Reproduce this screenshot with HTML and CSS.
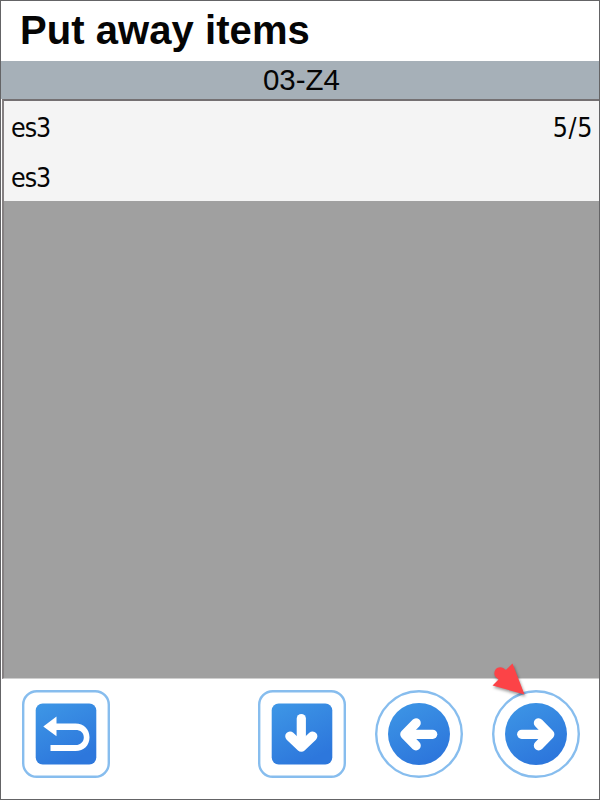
FILE: index.html
```html
<!DOCTYPE html>
<html lang="en">
<head>
<meta charset="utf-8">
<title>Put away items</title>
<link rel="stylesheet" href="styles.css">
</head>
<body>
<main class="screen">
  <h1 class="title">Put away items</h1>
  <div class="location">03-Z4</div>
  <section class="list">
    <div class="item">
      <div class="row"><span>es3</span><span class="qty">5/5</span></div>
      <div class="row"><span>es3</span></div>
    </div>
  </section>
  <footer class="toolbar">
    <button class="btn back" aria-label="Back">
      <svg viewBox="0 0 88 88">
        <defs><linearGradient id="blue" x1="0" y1="0" x2="0.5" y2="1"><stop offset="0" stop-color="#3e97e6"/><stop offset="1" stop-color="#2d77dc"/></linearGradient></defs>
        <rect class="ring" x="1.2" y="1.2" width="85.6" height="85.6" rx="13.5"/>
        <rect x="13.7" y="13.5" width="60.6" height="61" rx="7" fill="url(#blue)"/>
        <path d="M21.3 36.6 34.5 26.5V33.4H53.5C62 33.4 67.5 39.2 67.5 47.2S62 61 53.5 61H28.5V55H53.5C58.5 55 61.8 51.8 61.8 47.2S58.5 39.9 53.5 39.9H34.5V46.3Z" fill="#fff"/>
      </svg>
    </button>
    <button class="btn down" aria-label="Down">
      <svg viewBox="0 0 88 88">
        <rect class="ring" x="1.2" y="1.2" width="85.6" height="85.6" rx="13.5"/>
        <rect x="13.7" y="13.5" width="60.6" height="61" rx="7" fill="url(#blue)"/>
        <path class="shaft" d="M43.3 28.5V52"/>
        <path class="head" d="M32 46.2 43.3 57 54.6 46.2"/>
      </svg>
    </button>
    <button class="btn" aria-label="Previous">
      <svg viewBox="0 0 88 88">
        <circle class="ring" cx="44" cy="44" r="42.8"/>
        <circle cx="44" cy="44" r="31" fill="url(#blue)"/>
        <path class="shaft" d="M57.7 44.3H33"/>
        <path class="head" d="M41 33 30 44.3 41 55.6"/>
      </svg>
    </button>
    <button class="btn" aria-label="Next">
      <svg viewBox="0 0 88 88">
        <circle class="ring" cx="44" cy="44" r="42.8"/>
        <circle cx="44" cy="44" r="31" fill="url(#blue)"/>
        <path class="shaft" d="M29.7 44.3H55"/>
        <path class="head" d="M46.6 33 57.6 44.3 46.6 55.6"/>
      </svg>
      <svg class="pointer" viewBox="0 0 36 36">
        <path d="M32.5 31.5 20.5 .5 13.8 7.1C11 3.5 6 3.2 3.5 6.6 1.8 9 2 12 3.8 14L6.5 16.5.5 22.5Z" fill="#fc4347"/>
      </svg>
    </button>
  </footer>
</main>
</body>
</html>
```
FILE: styles.css
```css
* {
  box-sizing: border-box;
}

body {
  margin: 0;
}

.screen {
  width: 600px;
  height: 800px;
  display: flex;
  flex-direction: column;
  overflow: hidden;
  border: 1px solid #646466;
  background: #fff;
  color: #050505;
  font-family: "Liberation Sans", Arial, sans-serif;
}

.title {
  height: 60px;
  margin: 0;
  padding-left: 19px;
  font-size: 40px;
  line-height: 58px;
  font-weight: bold;
  letter-spacing: 0.06px;
}

.location {
  height: 38px;
  padding-left: 3px;
  background: #a6b0b8;
  font-size: 29.5px;
  line-height: 38px;
  text-align: center;
}

.list {
  height: 580px;
  margin-left: 1px;
  border-top: 2px solid #747072;
  border-left: 2px solid #858182;
  border-bottom: 1px solid #cfcfcf;
  background: #a0a0a0;
}

.item {
  height: 100px;
  background: #f4f4f4;
}

.row {
  display: flex;
  justify-content: space-between;
  height: 50px;
  padding: 0 6px 0 7px;
  font-family: "DejaVu Sans Condensed", "DejaVu Sans", sans-serif;
  font-stretch: condensed;
  font-size: 26.5px;
  line-height: 53px;
  letter-spacing: -1px;
}

.qty {
  letter-spacing: 0.6px;
}

.toolbar {
  display: grid;
  grid-template-columns: repeat(5, 88px);
  column-gap: 29.4px;
  padding: 11px 0 0 21.5px;
}

.btn {
  position: relative;
  width: 88px;
  height: 88px;
  padding: 0;
  border: 0;
  background: none;
}

.btn svg {
  display: block;
  width: 88px;
  height: 88px;
}

.back {
  margin-left: -1px;
}

.down {
  grid-column: 3;
  margin-left: 0.4px;
}

.ring {
  fill: #fff;
  stroke: #87bdee;
  stroke-width: 2.4;
}

.shaft,
.head {
  fill: none;
  stroke: #fff;
  stroke-width: 9.2;
  stroke-linecap: round;
  stroke-linejoin: round;
}

.head {
  stroke-width: 9.6;
}

.btn .pointer {
  position: absolute;
  left: 0;
  top: -27px;
  width: 36px;
  height: 36px;
  overflow: visible;
  filter: drop-shadow(1px 2px 1.5px rgba(0, 0, 0, 0.4));
}
```
